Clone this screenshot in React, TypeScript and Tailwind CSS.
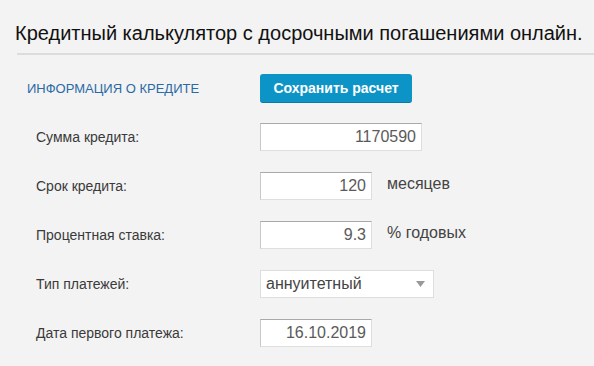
function Field({label, children}: {label: string; children: React.ReactNode}) {
    return (
        <div className="flex items-center h-[28px] mb-[21px]">
            <div className="w-[245px] pl-[21px] text-[14px] text-[#3a3a3a] font-['Liberation_Sans',sans-serif]">{label}</div>
            {children}
        </div>
    );
}

function NumInput({value, w}: {value: string; w: string}) {
    return (
        <div
            className={`${w} h-[28px] bg-white border border-[#dedede] border-t-[#a9a9a9] border-l-[#c8c8c8] flex items-center justify-end pr-[5px] text-[16px] text-[#5a5a5a] font-['Liberation_Sans',sans-serif]`}
        >
            {value}
        </div>
    );
}

export default function App() {
    return (
        <div className="w-[594px] h-[366px] bg-[#f3f3f3] overflow-hidden font-['Liberation_Sans',sans-serif]">
            <div className="pl-[15px]">
                <h1 className="pt-[21px] text-[20px] leading-[24px] text-[#111] whitespace-nowrap">
                    Кредитный калькулятор с досрочными погашениями онлайн.
                </h1>
                <div className="mt-[8px] ml-[2px] h-[2px] bg-[#dcdcdc]" />
            </div>
            <div className="pl-[15px] pt-[19px]">
                <div className="flex items-center h-[29px] mb-[20px]">
                    <div className="w-[245px] pl-[12px] text-[13px] text-[#2a6aa5] uppercase">Информация о кредите</div>
                    <button className="w-[152px] h-[29px] rounded-[3px] bg-[#0d94c7] border-b border-[#0a7aa6] text-white font-bold text-[14px]">
                        Сохранить расчет
                    </button>
                </div>
                <Field label="Сумма кредита:">
                    <NumInput value="1170590" w="w-[162px]" />
                </Field>
                <Field label="Срок кредита:">
                    <NumInput value="120" w="w-[112px]" />
                    <span className="ml-[15px] -mt-[4px] text-[16px] text-[#444]">месяцев</span>
                </Field>
                <Field label="Процентная ставка:">
                    <NumInput value="9.3" w="w-[112px]" />
                    <span className="ml-[15px] -mt-[4px] text-[16px] text-[#444]">% годовых</span>
                </Field>
                <Field label="Тип платежей:">
                    <div className="w-[174px] h-[28px] bg-white border border-[#dedede] flex items-center justify-between pl-[5px] pr-[8px] text-[16px] text-[#444]">
                        <span>аннуитетный</span>
                        <svg width="9" height="6" viewBox="0 0 9 6">
                            <path d="M0 0H9L4.5 6Z" fill="#999" />
                        </svg>
                    </div>
                </Field>
                <Field label="Дата первого платежа:">
                    <NumInput value="16.10.2019" w="w-[112px]" />
                </Field>
            </div>
        </div>
    );
}
